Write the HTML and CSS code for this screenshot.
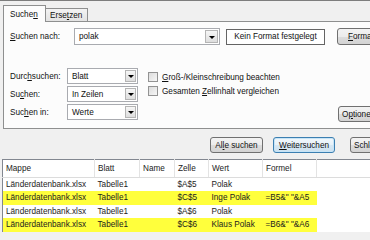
FILE: index.html
```html
<!DOCTYPE html>
<html lang="de">
<head>
<meta charset="UTF-8">
<title>Suchen und Ersetzen</title>
<link rel="stylesheet" href="styles.css">
</head>
<body>
<div class="tabs">
  <span class="tab tab-active">Suche<u>n</u></span>
  <span class="tab tab-other">Erse<u>t</u>zen</span>
</div>

<div class="panel">
  <div class="row-find">
    <span class="lbl-find"><u>S</u>uchen nach:</span>
    <div class="combo combo-find"><span class="combo-text">polak</span><span class="arrow"></span></div>
    <div class="format-box">Kein Format festgelegt</div>
    <span class="btn btn-format"><u>F</u>ormat...</span>
  </div>

  <div class="options">
    <div class="opt-grid">
      <span>Durc<u>h</u>suchen:</span>
      <div class="combo"><span class="combo-text">Blatt</span><span class="arrow"></span></div>
      <span>Su<u>c</u>hen:</span>
      <div class="combo"><span class="combo-text">In Zeilen</span><span class="arrow"></span></div>
      <span>Suc<u>h</u>en in:</span>
      <div class="combo"><span class="combo-text">Werte</span><span class="arrow"></span></div>
    </div>
    <div class="checks">
      <div class="check"><span class="box"></span><span><u>G</u>roß-/Kleinschreibung beachten</span></div>
      <div class="check"><span class="box"></span><span>Gesamten <u>Z</u>ellinhalt vergleichen</span></div>
    </div>
    <span class="btn btn-options">O<u>p</u>tionen &lt;&lt;</span>
  </div>
</div>

<div class="actions">
  <span class="btn btn-all">Al<u>l</u>e suchen</span>
  <span class="btn btn-next"><u>W</u>eitersuchen</span>
  <span class="btn btn-close">Schließen</span>
</div>

<table class="results">
  <colgroup>
    <col class="c-book"><col class="c-sheet"><col class="c-name"><col class="c-cell"><col class="c-value"><col class="c-formula"><col>
  </colgroup>
  <tr>
    <th>Mappe</th><th>Blatt</th><th>Name</th><th>Zelle</th><th>Wert</th><th>Formel</th><th class="filler"></th>
  </tr>
  <tr>
    <td>Länderdatenbank.xlsx</td><td>Tabelle1</td><td></td><td>$A$5</td><td>Polak</td><td></td><td class="filler"></td>
  </tr>
  <tr class="hit">
    <td>Länderdatenbank.xlsx</td><td>Tabelle1</td><td></td><td>$C$5</td><td>Inge Polak</td><td>=B5&amp;" "&amp;A5</td><td class="filler"></td>
  </tr>
  <tr>
    <td>Länderdatenbank.xlsx</td><td>Tabelle1</td><td></td><td>$A$6</td><td>Polak</td><td></td><td class="filler"></td>
  </tr>
  <tr class="hit">
    <td>Länderdatenbank.xlsx</td><td>Tabelle1</td><td></td><td>$C$6</td><td>Klaus Polak</td><td>=B6&amp;" "&amp;A6</td><td class="filler"></td>
  </tr>
</table>
</body>
</html>
```

FILE: styles.css
```css
* {
  box-sizing: border-box;
}
html, body {
  margin: 0;
}
body {
  width: 370px;
  height: 240px;
  overflow: hidden;
  background-color: #f0f0f0;
  border-top: 1px solid #7d7d7d;
  font-family: "Liberation Sans", Arial, sans-serif;
  font-size: 8.2px;
  color: #111;
}
u {
  text-decoration-thickness: 1px;
  text-underline-offset: 1px;
}

/* tabs */
.tabs {
  display: flex;
  align-items: flex-end;
  height: 16px;
  margin: 4px 0 0 3px;
}
.tab {
  display: flex;
  align-items: center;
  border: 1px solid #8e8f8f;
  border-bottom: none;
}
.tab-active {
  width: 43px;
  height: 17px;
  margin-bottom: -1px;
  padding-left: 6px;
  background-color: #fcfcfc;
  position: relative;
  z-index: 1;
}
.tab-other {
  width: 42px;
  height: 13px;
  padding-left: 4px;
  border-left: none;
  background: linear-gradient(#f3f3f3, #e3e3e3);
}

/* tab panel */
.panel {
  width: 420px;
  height: 108px;
  margin-left: 3px;
  padding: 6px 0 0 6px;
  border: 1px solid #8e8f8f;
  background-color: #fcfcfc;
}
.row-find {
  display: flex;
  align-items: center;
  height: 17px;
}
.row-find > * {
  flex: none;
}
.lbl-find {
  width: 64px;
}
.combo {
  display: flex;
  align-items: center;
  height: 16px;
  padding: 1px;
  border: 1px solid #a9abb0;
  background-color: #fff;
}
.combo-find {
  width: 146px;
  height: 17px;
}
.combo-text {
  flex: 1;
  padding-left: 3px;
}
.arrow {
  width: 11px;
  height: 100%;
  border: 1px solid #b5b5b5;
  background: linear-gradient(#f6f6f6, #dedede);
  display: flex;
  align-items: center;
  justify-content: center;
}
.combo-find .arrow {
  width: 13px;
}
.arrow::after {
  content: "";
  border-left: 3px solid transparent;
  border-right: 3px solid transparent;
  border-top: 3px solid #000;
  margin-top: 1px;
}
.format-box {
  width: 99px;
  height: 16px;
  margin-left: 6px;
  border: 1px solid #646464;
  background-color: #fff;
  display: flex;
  align-items: center;
  justify-content: center;
}

/* buttons */
.btn {
  display: flex;
  flex: none;
  align-items: center;
  justify-content: center;
  height: 16px;
  border: 1px solid #707070;
  border-radius: 3px;
  background: linear-gradient(#f3f3f3 0%, #ececec 50%, #dddddd 51%, #d3d3d3 100%);
  white-space: nowrap;
  overflow: hidden;
}
.btn-format {
  width: 70px;
  height: 17px;
  margin-left: 12px;
  justify-content: flex-start;
  padding-left: 10px;
}
.btn-options {
  width: 60px;
  align-self: flex-end;
  margin-bottom: -2px;
  justify-content: flex-start;
  padding-left: 3px;
}

/* search options */
.options {
  display: flex;
  margin-top: 23px;
}
.opt-grid {
  display: grid;
  flex: none;
  grid-template-columns: 57px 71px;
  grid-auto-rows: 16px;
  row-gap: 2px;
  align-items: center;
}
.checks {
  flex: none;
  width: 190px;
  margin: 4px 0 0 10px;
  display: flex;
  flex-direction: column;
  gap: 4px;
}
.check {
  display: flex;
  align-items: center;
  height: 10px;
}
.box {
  width: 10px;
  height: 10px;
  margin-right: 4px;
  border: 1px solid #939393;
  background: linear-gradient(135deg, #dcdcdc, #f7f7f7);
}

/* dialog buttons */
.actions {
  display: flex;
  margin-top: 8px;
  padding-left: 210px;
}
.btn-all {
  width: 53px;
  margin-right: 10px;
}
.btn-next {
  width: 62px;
  margin-right: 15px;
  border-color: #3c7fb1;
  background: linear-gradient(#f2f8fc 0%, #e7f1f8 50%, #d6e7f3 51%, #cde1ef 100%);
  box-shadow: inset 0 0 0 1px #c6e4f7;
}
.btn-close {
  width: 70px;
  justify-content: flex-start;
  padding-left: 3px;
}

/* result list */
.results {
  width: 400px;
  margin: 6px 0 0 2px;
  border-collapse: collapse;
  table-layout: fixed;
  background-color: #fff;
  border-top: 1px solid #828790;
  border-left: 1px solid #828790;
  color: #1c1c1c;
}
.c-book { width: 92px; }
.c-sheet { width: 45px; }
.c-name { width: 35px; }
.c-cell { width: 34px; }
.c-value { width: 54px; }
.c-formula { width: 54px; }
th {
  height: 18px;
  padding: 0 3px;
  text-align: left;
  font-weight: normal;
  border-right: 1px solid #e3e3e3;
  border-bottom: 1px solid #dcdcdc;
}
th.filler {
  border-right: none;
}
td {
  height: 13.5px;
  padding: 0 3px;
  white-space: nowrap;
  overflow: hidden;
}
.hit td {
  background-color: #ffff3c;
}
.hit td.filler {
  background-color: #fff;
}
```
